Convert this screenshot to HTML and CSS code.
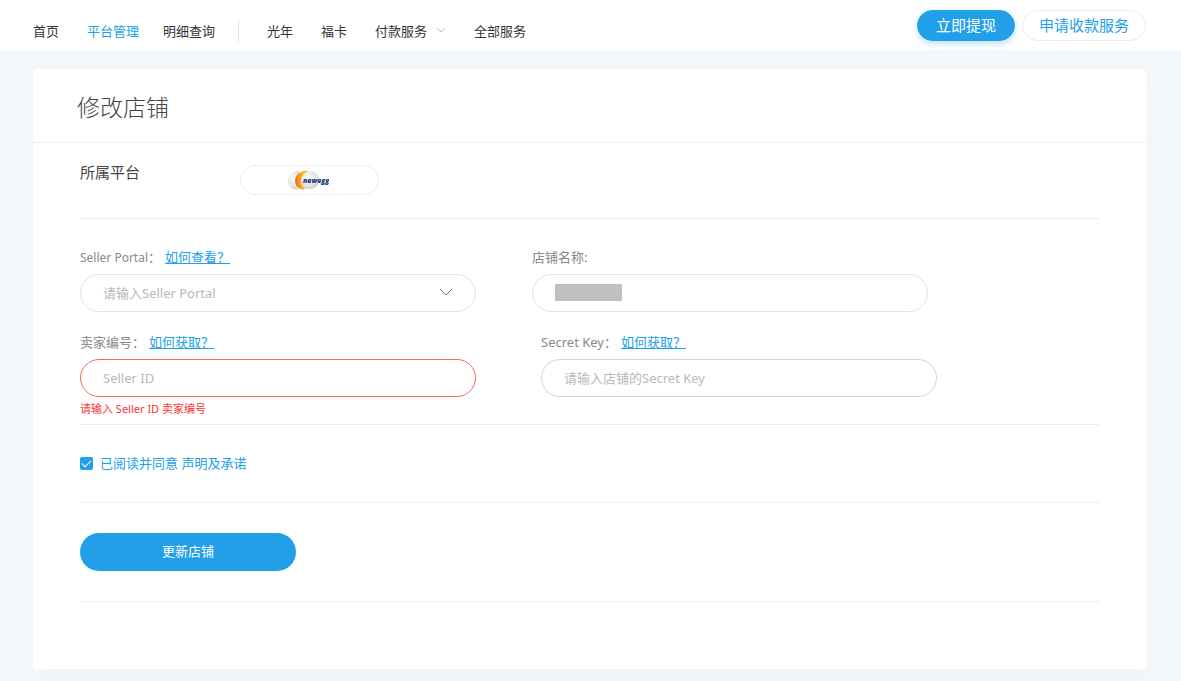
FILE: index.html
```html
<!DOCTYPE html>
<html lang="zh-CN">
<head>
<meta charset="utf-8">
<meta name="viewport" content="width=device-width, initial-scale=1">
<title>修改店铺</title>
<link rel="stylesheet" href="styles.css">
</head>
<body>
<header class="topbar">
  <nav class="nav">
    <a class="nav-link" href="#">首页</a>
    <div class="nav-group">
      <a class="nav-link nav-link-active" href="#">平台管理</a>
      <a class="nav-link" href="#">明细查询</a>
    </div>
    <span class="nav-divider"></span>
    <a class="nav-link" href="#">光年</a>
    <a class="nav-link" href="#">福卡</a>
    <a class="nav-link nav-link-menu" href="#">付款服务
      <svg class="nav-chevron" viewBox="0 0 10 6" aria-hidden="true"><path d="M1 1l4 4 4-4"/></svg>
    </a>
    <a class="nav-link" href="#">全部服务</a>
  </nav>
  <div class="actions">
    <button class="pill pill-primary" type="button">立即提现</button>
    <button class="pill pill-outline" type="button">申请收款服务</button>
  </div>
</header>

<main class="card">
  <h1 class="card-title">修改店铺</h1>
  <form class="card-body">
    <section class="platform">
      <span class="platform-label">所属平台</span>
      <div class="platform-logo">
        <svg class="logo" viewBox="0 0 42 20" role="img" aria-label="newegg">
          <defs>
            <radialGradient id="egg" cx="0.4" cy="0.35" r="0.7">
              <stop offset="0" stop-color="#fafafa"/>
              <stop offset="0.7" stop-color="#e2e2e2"/>
              <stop offset="1" stop-color="#c4c4c4"/>
            </radialGradient>
            <linearGradient id="yolk" x1="0" x2="0.6" y1="0" y2="0">
              <stop offset="0" stop-color="#ec6a1a"/>
              <stop offset="1" stop-color="#ffb92c"/>
            </linearGradient>
          </defs>
          <path d="M12 1C5 1 1 6 1 11c0 5 4 8.500 10 8.500z" fill="url(#egg)"/>
          <path d="M20 .5C12 .5 7 5 7 11c0 5 3 8.500 9 8.800z" fill="#fff"/>
          <path d="M21 .5C13 .5 8 5 8 11c0 5 3 8.500 10 8.800L15 12z" fill="url(#yolk)"/>
          <path d="M24 1c-6 0-10 5-10 10 0 5 3 8 8 8 6 0 10-4 10-9 0-5-3-9-8-9z" fill="url(#egg)"/>
          <text class="logo-text" x="16" y="13">newegg</text>
        </svg>
      </div>
    </section>

    <section class="fields">
      <div class="field-row">
        <div class="field">
          <div class="field-head">
            <label for="portal"><span class="latin">Seller Portal</span>：</label>
            <a class="help" href="#">如何查看？</a>
          </div>
          <div class="control-wrap">
            <select class="control" id="portal"><option>请输入Seller Portal</option></select>
            <svg class="select-chevron" viewBox="0 0 14 9" aria-hidden="true"><path d="M1 1l6 6 6-6"/></svg>
          </div>
        </div>
        <div class="field">
          <div class="field-head"><label for="name">店铺名称:</label></div>
          <div class="control-wrap">
            <input class="control" id="name" type="text">
            <span class="masked"></span>
          </div>
        </div>
      </div>
      <div class="field-row field-row-keys">
        <div class="field">
          <div class="field-head">
            <label for="seller">卖家编号：</label>
            <a class="help" href="#">如何获取？</a>
          </div>
          <input class="control control-error" id="seller" type="text" placeholder="Seller ID" aria-describedby="seller-error">
          <p class="error" id="seller-error">请输入 Seller ID 卖家编号</p>
        </div>
        <div class="field">
          <div class="field-head">
            <label for="secret">Secret Key：</label>
            <a class="help" href="#">如何获取？</a>
          </div>
          <input class="control control-dark" id="secret" type="text" placeholder="请输入店铺的Secret Key">
        </div>
      </div>
    </section>

    <section class="agree">
      <input class="check" id="agree" type="checkbox" checked>
      <label for="agree">已阅读并同意 声明及承诺</label>
    </section>

    <section class="submit-row">
      <button class="submit" type="button">更新店铺</button>
    </section>
  </form>
</main>
</body>
</html>
```
FILE: styles.css
```css
* {
  box-sizing: border-box;
}

body {
  margin: 0;
  background: #f3f7fa;
  color: #333;
  font-family: "Noto Sans", "Noto Sans CJK SC", sans-serif;
  font-size: 13px;
  line-height: 20px;
}

a {
  color: inherit;
  text-decoration: none;
}

button,
input,
select {
  font: inherit;
}

.topbar {
  display: flex;
  justify-content: space-between;
  align-items: flex-start;
  padding: 10px 35px 8px 33px;
  background: #fff;
}

.nav {
  display: flex;
  align-items: center;
  gap: 28px;
  padding-top: 10px;
}

.nav-group {
  display: flex;
  gap: 24px;
}

.nav-group + .nav-divider {
  margin-left: -5px;
}

.nav-divider {
  width: 1px;
  height: 22px;
  background: #e6e6e6;
}

.nav-link-active {
  color: #219fe9;
}

.nav-link-menu {
  display: flex;
  align-items: center;
  gap: 9px;
}

.nav-chevron {
  width: 10px;
  height: 6px;
  margin-bottom: 3px;
  fill: none;
  stroke: #b8bcc0;
}

.actions {
  display: flex;
  gap: 7px;
}

.pill {
  height: 31px;
  padding: 0 16px 2px;
  border: 1px solid #ececec;
  border-radius: 16px;
  background: #fff;
  color: #219fe9;
  font-size: 15px;
  line-height: 20px;
}

.pill-primary {
  padding: 0 18px 2px;
  border-color: #219fe9;
  background: #219fe9;
  box-shadow: 0 3px 6px #bde3fa;
  color: #fff;
}

.card {
  margin: 19px 35px 12px 33px;
  border-radius: 4px;
  background: #fff;
  box-shadow: 0 6px 12px #f4f4f4;
}

.card-title {
  margin: 0;
  padding: 22px 44px 19px;
  border-bottom: 1px solid #ebedee;
  color: #444;
  font-size: 23px;
  font-weight: 300;
  line-height: 32px;
}

.card-body {
  padding: 0 47px 67px;
}

.platform,
.fields,
.agree,
.submit-row {
  border-bottom: 1px solid #ebeced;
}

.platform {
  display: flex;
  align-items: flex-start;
  gap: 100px;
  padding: 22px 0 23px;
}

.platform-label {
  color: #444;
  font-size: 15px;
  line-height: 14px;
}

.platform-logo {
  display: flex;
  align-items: center;
  width: 139px;
  height: 30px;
  padding-left: 46px;
  border: 1px solid #ebedf7;
  border-radius: 15px;
}

.logo {
  width: 42px;
  height: 20px;
}

.logo-text {
  fill: #1c3f6e;
  font-family: "Open Sans", sans-serif;
  font-size: 7px;
  font-style: italic;
  font-weight: 800;
}

.fields {
  display: grid;
  gap: 20px;
  padding: 28px 0 5px;
}

.field-row {
  display: grid;
  grid-template-columns: 1fr 1fr;
  gap: 56px;
  padding-right: 171px;
}

.field-row-keys {
  gap: 65px;
  padding-right: 162px;
}

.field-head {
  display: flex;
  gap: 4px;
  margin-bottom: 7px;
  color: #888;
}

.latin {
  font-size: 12px;
  line-height: 1;
}

.help {
  color: #219fe9;
  text-decoration: underline;
}

.control-wrap {
  position: relative;
}

.control {
  display: block;
  width: 100%;
  height: 38px;
  padding: 0 22px;
  border: 1px solid #e0e6e6;
  border-radius: 19px;
  outline: 0;
  background: #fff;
  appearance: none;
  color: #b8b8b8;
}

.control::placeholder {
  color: #b8b8b8;
}

.control-error {
  border-color: #fa6565;
}

.control-dark {
  border-color: #d4d4d4;
}

.select-chevron {
  position: absolute;
  top: 14px;
  right: 23px;
  width: 14px;
  height: 9px;
  fill: none;
  stroke: #777;
  pointer-events: none;
}

.masked {
  position: absolute;
  top: 10px;
  left: 23px;
  width: 67px;
  height: 17px;
  background: #c0c0c0;
}

.error {
  margin: 2px 0 0;
  color: #f93535;
  font-size: 11px;
  line-height: 20px;
}

.agree {
  display: flex;
  align-items: center;
  gap: 7px;
  padding: 28px 0 29px;
  color: #219fe9;
}

.check {
  display: grid;
  place-items: center;
  width: 13px;
  height: 13px;
  margin: 0;
  border-radius: 2px;
  background: #219fe9;
  appearance: none;
}

.check:checked::after {
  content: "";
  width: 8px;
  height: 4px;
  margin-bottom: 2px;
  border: solid #fff;
  border-width: 0 0 1px 1px;
  transform: rotate(-45deg);
}

.submit-row {
  padding: 30px 0;
}

.submit {
  display: block;
  width: 216px;
  height: 38px;
  padding: 0 0 2px;
  border: 0;
  border-radius: 19px;
  background: #219fe9;
  color: #fff;
}
```
